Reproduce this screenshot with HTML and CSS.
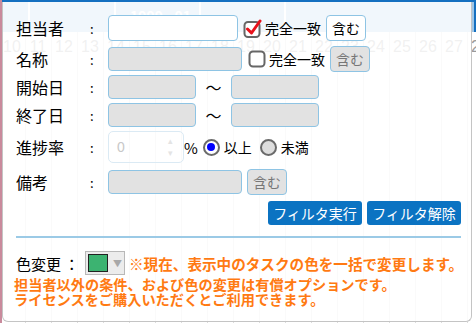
FILE: index.html
```html
<!DOCTYPE html>
<html lang="ja">
<head>
  <meta charset="UTF-8" />
  <title>フィルタ</title>
  <link rel="stylesheet" href="styles.css">
</head>
<body>
  <!-- 背景のガントチャート -->
  <div class="gantt">
    <div class="gantt-head">
      <span class="cell-a"></span><span class="cell-b"></span><span class="cell-c">1999 - 01</span><span class="cell-c"></span><span class="cell-d"></span>
    </div>
    <div class="gantt-days">
      <span>10</span><span>11</span><span>12</span><span>13</span><span>14</span><span>15</span><span>16</span><span>17</span><span>18</span><span>19</span><span>20</span><span>21</span><span>22</span><span>23</span><span>24</span><span>25</span><span>26</span><span>27</span><span>28</span>
    </div>
  </div>

  <div class="dialog">
    <form class="filter">
      <div class="row r1">
        <label class="lbl">担当者</label><span class="colon">:</span>
        <input type="text" class="txt w130">
        <span class="chk on"><svg width="19" height="19" viewBox="0 0 19 19"><rect x="1.5" y="3" width="15" height="15" rx="3.5" fill="#fff" stroke="#666" stroke-width="2"/><path d="M4.5 10 L8.5 14 L17 2" fill="none" stroke="#e8121b" stroke-width="3" stroke-linecap="round" stroke-linejoin="round"/></svg></span>
        <span class="opt">完全一致</span>
        <button type="button" class="btn-inc">含む</button>
      </div>
      <div class="row r2">
        <label class="lbl">名称</label><span class="colon">:</span>
        <input type="text" class="txt w134" disabled>
        <span class="chk off"><svg width="18" height="18" viewBox="0 0 18 18"><rect x="1.5" y="1.5" width="15" height="15" rx="3.5" fill="#fff" stroke="#666" stroke-width="2"/></svg></span>
        <span class="opt">完全一致</span>
        <button type="button" class="btn-inc" disabled>含む</button>
      </div>
      <div class="row r3">
        <label class="lbl">開始日</label><span class="colon">:</span>
        <input type="text" class="txt w88" disabled>
        <span class="tilde">～</span>
        <input type="text" class="txt w88" disabled>
      </div>
      <div class="row r4">
        <label class="lbl">終了日</label><span class="colon">:</span>
        <input type="text" class="txt w88" disabled>
        <span class="tilde">～</span>
        <input type="text" class="txt w88" disabled>
      </div>
      <div class="row r5">
        <label class="lbl">進捗率</label><span class="colon">:</span>
        <div class="num"><span class="num-val">0</span><span class="spin">▴<br>▾</span></div>
        <span class="pct">%</span>
        <span class="radio on"></span><span class="opt">以上</span>
        <span class="radio"></span><span class="opt">未満</span>
      </div>
      <div class="row r6">
        <label class="lbl">備考</label><span class="colon">:</span>
        <input type="text" class="txt w134" disabled>
        <button type="button" class="btn-inc" disabled>含む</button>
      </div>
      <div class="actions">
        <button type="button" class="btn-blue">フィルタ実行</button>
        <button type="button" class="btn-blue">フィルタ解除</button>
      </div>
    </form>

    <hr class="divider">

    <div class="color-row">
      <span class="color-lbl">色変更 ：</span>
      <span class="color-sel"><span class="swatch"></span><span class="arrow">▼</span></span>
      <span class="note">※現在、表示中のタスクの色を一括で変更します。</span>
    </div>
    <p class="notice">担当者以外の条件、および色の変更は有償オプションです。<br>ライセンスをご購入いただくとご利用できます。</p>
  </div>
</body>
</html>
```

FILE: styles.css
```css
html, body {
  margin: 0;
  padding: 0;
}

body {
  width: 476px;
  height: 323px;
  overflow: hidden;
  position: relative;
  font-family: "Noto Sans CJK JP", "Noto Sans", sans-serif;
  color: #000;
  background: #fff;
}

/* 背景のガントチャート */
.gantt {
  position: absolute;
  inset: 0;
  overflow: hidden;
  background-image: linear-gradient(to right, #dcdcdc 1px, transparent 1px);
  background-size: 26px 100%;
  background-position: -3px 0;
  border-left: 2px solid #c98a9c;
}

.gantt-head {
  height: 32px;
  display: flex;
  background: #9fc6e6;
  border-top: 2px solid #1570c0;
  box-sizing: border-box;
}
.gantt-head span {
  border-right: 2px solid #fff;
  height: 100%;
  color: #fff;
  font-size: 14px;
  font-weight: bold;
  box-sizing: border-box;
}
.cell-a { width: 28px; }
.cell-b { width: 86px; }
.cell-c { width: 85px; padding: 4px 0 0 14px; }
.cell-d { flex: 1; border-right: 2px solid #1570c0 !important; }

.gantt-days {
  display: flex;
  margin-left: -3px;
  height: 30px;
  align-items: center;
}
.gantt-days span {
  width: 26px;
  flex: none;
  text-align: center;
  font-family: "Liberation Sans", sans-serif;
  font-size: 16px;
  color: #9a9a9a;
}

/* フィルタダイアログ */
.dialog {
  position: absolute;
  left: 2px;
  top: 2px;
  width: 470px;
  height: 320px;
  box-sizing: border-box;
  background: rgba(255, 255, 255, 0.86);
  border: 1px solid #c4c4c4;
  border-top: none;
  border-radius: 0 0 6px 6px;
  padding: 12px 0 0 13px;
}

.row {
  display: flex;
  align-items: center;
}
.r1 { height: 28px; }
.r2 { height: 28px; margin-top: 3px; }
.r3 { height: 24px; margin-top: 2px; }
.r4 { height: 24px; margin-top: 4px; }
.r5 { height: 32px; margin-top: 4px; }
.r6 { height: 26px; margin-top: 6px; }

.lbl {
  width: 74px;
  font-size: 16px;
}
.colon {
  width: 18px;
  font-size: 13px;
}

.txt {
  height: 24px;
  box-sizing: border-box;
  border: 1px solid #8ec4e4;
  border-radius: 4px;
  background: #fff;
  padding: 0 6px;
  margin: 0;
}
.txt:disabled {
  background: #e2e2e2;
}
.w130 { width: 130px; height: 26px; }
.w134 { width: 134px; }
.w88 { width: 88px; }

.chk {
  display: inline-flex;
  margin-left: 5px;
}
.chk.off { margin-left: 6px; }

.opt {
  font-size: 14px;
  margin-left: 3px;
}

.btn-inc {
  font-family: inherit;
  font-size: 14px;
  height: 26px;
  width: 40px;
  padding: 0;
  margin-left: 5px;
  border: 1px solid #8ec4e4;
  border-radius: 4px;
  background: #fff;
  color: #000;
}
.btn-inc:disabled {
  background: #e2e2e2;
  color: #777;
}

.tilde {
  width: 35px;
  text-align: center;
  font-size: 16px;
}

.num {
  width: 76px;
  height: 32px;
  box-sizing: border-box;
  border: 1px solid #dbeaf4;
  border-radius: 5px;
  display: flex;
  align-items: center;
  justify-content: space-between;
  padding: 0 10px 0 8px;
}
.num-val {
  color: #c8c8c8;
  font-family: "Liberation Sans", sans-serif;
  font-size: 14px;
}
.spin {
  color: #e4e4e4;
  font-size: 9px;
  line-height: 12px;
}
.pct {
  font-size: 15px;
  margin-left: 0;
}

.radio {
  width: 17px;
  height: 17px;
  box-sizing: border-box;
  border: 2px solid #6b6b6b;
  border-radius: 50%;
  background: #dedede;
  margin-left: 5px;
  position: relative;
}
.radio.on {
  background: #fff;
}
.radio.on::after {
  content: "";
  position: absolute;
  left: 2.5px;
  top: 2.5px;
  width: 8px;
  height: 8px;
  border-radius: 50%;
  background: #0000ff;
}
.radio + .opt { margin-left: 4px; }
.opt + .radio { margin-left: 8px; }

.actions {
  display: flex;
  justify-content: flex-end;
  gap: 5px;
  margin: 6px 10px 0 0;
}
.btn-blue {
  font-family: inherit;
  font-size: 14px;
  height: 24px;
  padding: 0 5px;
  width: 94px;
  border: none;
  border-radius: 3px;
  background: #0b73c2;
  color: #fff;
}

.divider {
  border: none;
  height: 2px;
  background: #9bcae6;
  margin: 11px 10px 0 0;
}

.color-row {
  display: flex;
  align-items: center;
  margin-top: 13px;
  height: 24px;
}
.color-lbl {
  font-size: 15px;
  width: 69px;
}
.color-sel {
  width: 40px;
  height: 24px;
  box-sizing: border-box;
  border: 1px solid #b8b8b8;
  background: #ececec;
  display: flex;
  align-items: center;
  padding-left: 2px;
}
.swatch {
  width: 20px;
  height: 18px;
  box-sizing: border-box;
  background: #3cb371;
  border: 1px solid #222;
}
.arrow {
  font-size: 9px;
  color: #a8a8a8;
  margin-left: 5px;
}
.note {
  margin-left: 4px;
  font-size: 14.6px;
  font-weight: bold;
  color: #ff7a12;
}

.notice {
  margin: 2px 0 0 -2px;
  font-size: 14.2px;
  line-height: 15px;
  font-weight: bold;
  color: #ff7a12;
}
```
